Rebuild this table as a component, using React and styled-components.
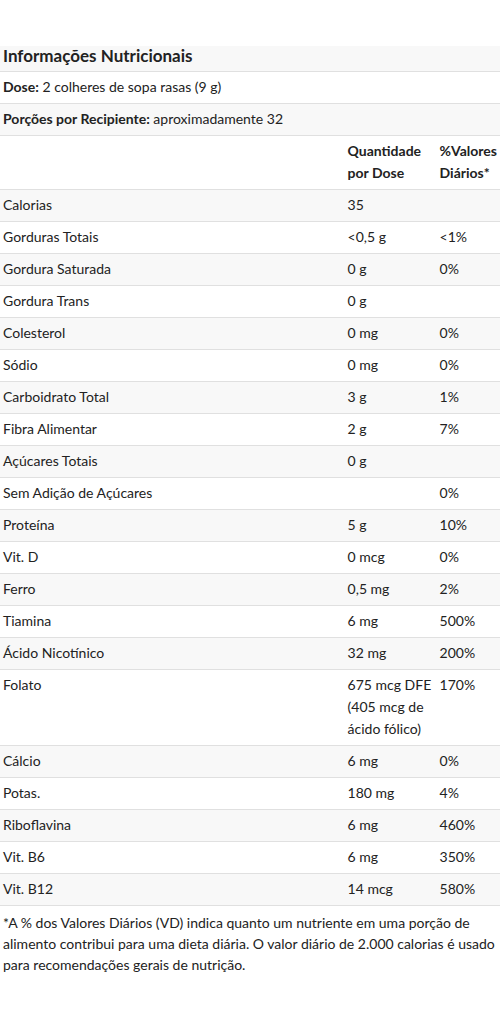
import React from 'react';
import styled, { createGlobalStyle } from 'styled-components';

const Global = createGlobalStyle`
  body {
    margin: 0;
    background: #fff;
    font-family: Lato, "Open Sans", sans-serif;
    color: #222;
  }
`;

const Wrapper = styled.div`
  padding-top: 46px;
  width: 500px;
`;

const Title = styled.h2`
  margin: 0;
  padding: 0 3px 6px;
  font-size: 17px;
  line-height: 19px;
  font-weight: 700;
  background: #f8f8f8;
  border-bottom: 1px solid #e0e0e0;
`;

const Table = styled.table`
  width: 100%;
  border-collapse: collapse;
  font-size: 14px;
  line-height: 22px;
`;

const Row = styled.tr`
  background: ${(p) => (p.$shade ? '#f8f8f8' : '#fff')};
  border-bottom: 1px solid #e0e0e0;
`;

const Cell = styled.td`
  padding: 4px 3px 5px;
  vertical-align: top;
  width: ${(p) => p.$w || 'auto'};
`;

const HeadCell = styled(Cell)`
  font-weight: 700;
`;

const Strong = styled.b`
  font-weight: 700;
`;

const Note = styled.p`
  margin: 0;
  padding: 6px 3px;
  font-size: 14px;
  line-height: 21px;
`;

const nutrients = [
  ['Calorias', '35', ''],
  ['Gorduras Totais', '<0,5 g', '<1%'],
  ['Gordura Saturada', '0 g', '0%'],
  ['Gordura Trans', '0 g', ''],
  ['Colesterol', '0 mg', '0%'],
  ['Sódio', '0 mg', '0%'],
  ['Carboidrato Total', '3 g', '1%'],
  ['Fibra Alimentar', '2 g', '7%'],
  ['Açúcares Totais', '0 g', ''],
  ['Sem Adição de Açúcares', '', '0%'],
  ['Proteína', '5 g', '10%'],
  ['Vit. D', '0 mcg', '0%'],
  ['Ferro', '0,5 mg', '2%'],
  ['Tiamina', '6 mg', '500%'],
  ['Ácido Nicotínico', '32 mg', '200%'],
  ['Folato', '675 mcg DFE (405 mcg de ácido fólico)', '170%'],
  ['Cálcio', '6 mg', '0%'],
  ['Potas.', '180 mg', '4%'],
  ['Riboflavina', '6 mg', '460%'],
  ['Vit. B6', '6 mg', '350%'],
  ['Vit. B12', '14 mcg', '580%'],
];

export default function App() {
  return (
    <Wrapper>
      <Global />
      <Title>Informações Nutricionais</Title>
      <Table>
        <tbody>
          <Row>
            <Cell colSpan={3}>
              <Strong>Dose:</Strong> 2 colheres de sopa rasas (9 g)
            </Cell>
          </Row>
          <Row $shade>
            <Cell colSpan={3}>
              <Strong>Porções por Recipiente:</Strong> aproximadamente 32
            </Cell>
          </Row>
          <Row>
            <Cell />
            <HeadCell $w="86px">Quantidade por Dose</HeadCell>
            <HeadCell $w="57px">%Valores Diários*</HeadCell>
          </Row>
          {nutrients.map(([name, amount, dv], i) => (
            <Row key={name} $shade={i % 2 === 0}>
              <Cell>{name}</Cell>
              <Cell>{amount}</Cell>
              <Cell>{dv}</Cell>
            </Row>
          ))}
        </tbody>
      </Table>
      <Note>
        *A % dos Valores Diários (VD) indica quanto um nutriente em uma porção
        de alimento contribui para uma dieta diária. O valor diário de 2.000
        calorias é usado para recomendações gerais de nutrição.
      </Note>
    </Wrapper>
  );
}
